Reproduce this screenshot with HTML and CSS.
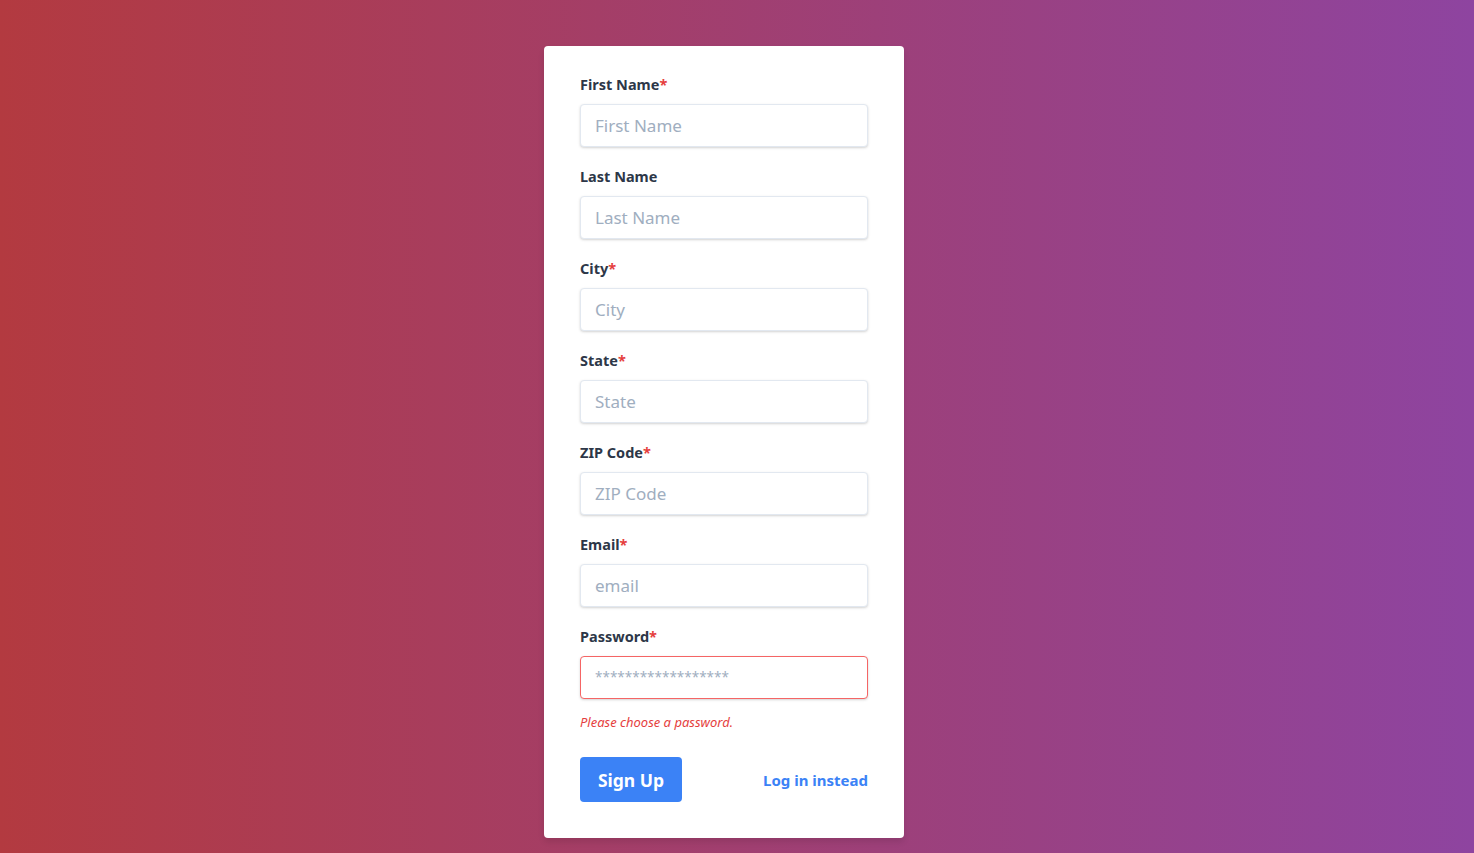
FILE: index.html
```html
<!DOCTYPE html>
<html lang="en">
<head>
<meta charset="utf-8">
<title>Sign Up</title>
<link rel="stylesheet" href="styles.css">
</head>
<body>
<main class="page">
  <form class="card">
    <div class="field">
      <label class="label">First Name<span class="req">*</span></label>
      <input class="input" type="text" placeholder="First Name">
    </div>
    <div class="field">
      <label class="label">Last Name</label>
      <input class="input" type="text" placeholder="Last Name">
    </div>
    <div class="field">
      <label class="label">City<span class="req">*</span></label>
      <input class="input" type="text" placeholder="City">
    </div>
    <div class="field">
      <label class="label">State<span class="req">*</span></label>
      <input class="input" type="text" placeholder="State">
    </div>
    <div class="field">
      <label class="label">ZIP Code<span class="req">*</span></label>
      <input class="input" type="text" placeholder="ZIP Code">
    </div>
    <div class="field">
      <label class="label">Email<span class="req">*</span></label>
      <input class="input" type="text" placeholder="email">
    </div>
    <div class="field field-last">
      <label class="label">Password<span class="req">*</span></label>
      <input class="input input-error" type="text" placeholder="******************">
      <p class="error">Please choose a password.</p>
    </div>
    <div class="actions">
      <button class="btn" type="button">Sign Up</button>
      <a class="link" href="#">Log in instead</a>
    </div>
  </form>
</main>
</body>
</html>
```
FILE: styles.css
```css
* { box-sizing: border-box; }
html, body { margin: 0; height: 100%; }
body {
  font-family: "Noto Sans", "Open Sans", sans-serif;
  background: linear-gradient(to right, #b33a40, #8e44a0);
}
.page {
  display: flex;
  justify-content: center;
  padding-top: 46px;
  padding-right: 26px;
  min-height: 853px;
}
.card {
  width: 360px;
  height: 792px;
  background: #fff;
  border-radius: 4px;
  padding: 28px 36px 36px;
  box-shadow: 0 4px 6px rgba(0,0,0,0.1);
}
.field { margin-bottom: 19px; }
.field-last { margin-bottom: 0; }
.label {
  display: block;
  font-size: 14.5px;
  font-weight: 700;
  color: #2d3748;
  line-height: 20px;
  height: 20px;
  margin-bottom: 10px;
}
.req { color: #e53e3e; }
.input {
  display: block;
  width: 100%;
  height: 43px;
  border: 1px solid #e2e8f0;
  border-radius: 4px;
  padding: 0 14px;
  font-family: inherit;
  font-size: 17px;
  color: #4a5568;
  box-shadow: 0 1px 3px rgba(0,0,0,0.12), 0 1px 2px rgba(0,0,0,0.06);
  outline: none;
}
.input::placeholder { color: #a0aec0; }
.input-error { border-color: #f56565; padding-bottom: 4px; }
.input-error::placeholder { font-size: 13.5px; }
.error {
  margin: 14px 0 0;
  font-size: 13px;
  line-height: 18px;
  font-style: italic;
  color: #e53e3e;
}
.actions {
  margin-top: 26px;
  display: flex;
  justify-content: space-between;
  align-items: center;
}
.btn {
  width: 102px;
  height: 45px;
  border: 0;
  border-radius: 4px;
  background: #3b82f6;
  color: #fff;
  font-family: inherit;
  font-size: 17.5px;
  font-weight: 700;
  cursor: pointer;
}
.link {
  color: #3b82f6;
  font-size: 15px;
  font-weight: 700;
  text-decoration: none;
}
```
